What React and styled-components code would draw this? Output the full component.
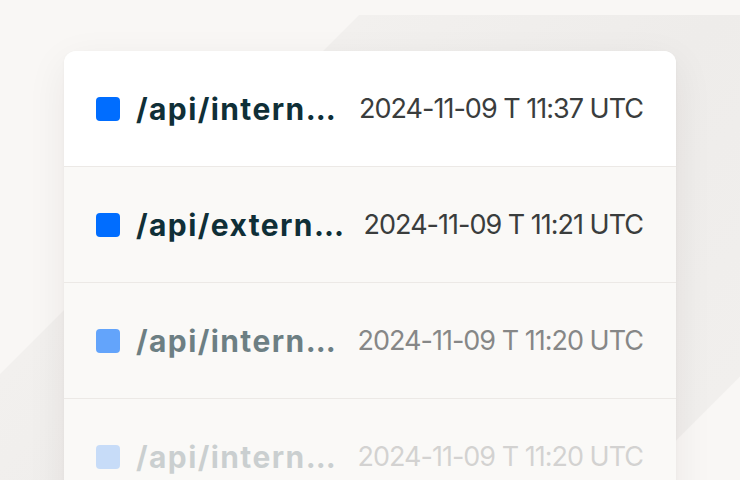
import React from 'react';
import styled, { createGlobalStyle } from 'styled-components';

const GlobalStyle = createGlobalStyle`
  body {
    margin: 0;
    font-family: Inter, "Noto Sans", sans-serif;
    background: #f9f7f5;
  }
`;

const rows = [
  { path: '/api/intern', time: '2024-11-09 T 11:37 UTC', fade: 1, first: true },
  { path: '/api/extern', time: '2024-11-09 T 11:21 UTC', fade: 1 },
  { path: '/api/intern', time: '2024-11-09 T 11:20 UTC', fade: 0.6 },
  { path: '/api/intern', time: '2024-11-09 T 11:20 UTC', fade: 0.2 },
];

export default function App() {
  return (
    <>
      <GlobalStyle />
      <Page>
        <Card>
          {rows.map((r, i) => (
            <Row key={i} $first={r.first}>
              <Content $fade={r.fade}>
                <Left>
                  <Dot />
                  <Path>
                    {r.path}
                    <Ellipsis>...</Ellipsis>
                  </Path>
                </Left>
                <Time>{r.time}</Time>
              </Content>
            </Row>
          ))}
        </Card>
      </Page>
    </>
  );
}

const Page = styled.div`
  width: 740px;
  height: 480px;
  overflow: hidden;
  box-sizing: border-box;
  padding: 51px 0 0 64px;
  background:
    linear-gradient(to bottom, #f9f7f5 15px, transparent 15px),
    linear-gradient(
      135deg,
      #f9f7f5 264px,
      #f2f0ee 265px,
      #eeecea 520px,
      #f1efed 789px,
      #f9f7f5 790px
    );
`;

const Card = styled.div`
  width: 612px;
  border-radius: 12px;
  background: #faf9f7;
  overflow: hidden;
  box-shadow: 0 12px 40px rgba(40, 30, 20, 0.07), 0 1px 3px rgba(40, 30, 20, 0.04);
`;

const Row = styled.div`
  height: 115px;
  border-bottom: 1px solid #ece9e6;
  background: ${(p) => (p.$first ? '#ffffff' : '#faf9f7')};
  box-sizing: content-box;
  display: flex;
  align-items: center;
  padding: 0 33px 0 32px;
`;

const Content = styled.div`
  flex: 1;
  display: flex;
  align-items: center;
  justify-content: space-between;
  opacity: ${(p) => p.$fade};
`;

const Left = styled.div`
  display: flex;
  align-items: center;
  gap: 16px;
`;

const Dot = styled.span`
  width: 24px;
  height: 24px;
  border-radius: 4px;
  background: #006dff;
`;

const Path = styled.span`
  font-size: 30px;
  font-weight: 700;
  letter-spacing: 1.4px;
  color: #0f2f37;
`;

const Ellipsis = styled.span`
  letter-spacing: 0;
`;

const Time = styled.span`
  font-size: 27px;
  font-weight: 400;
  letter-spacing: -1px;
  color: #3a3d3d;
`;
